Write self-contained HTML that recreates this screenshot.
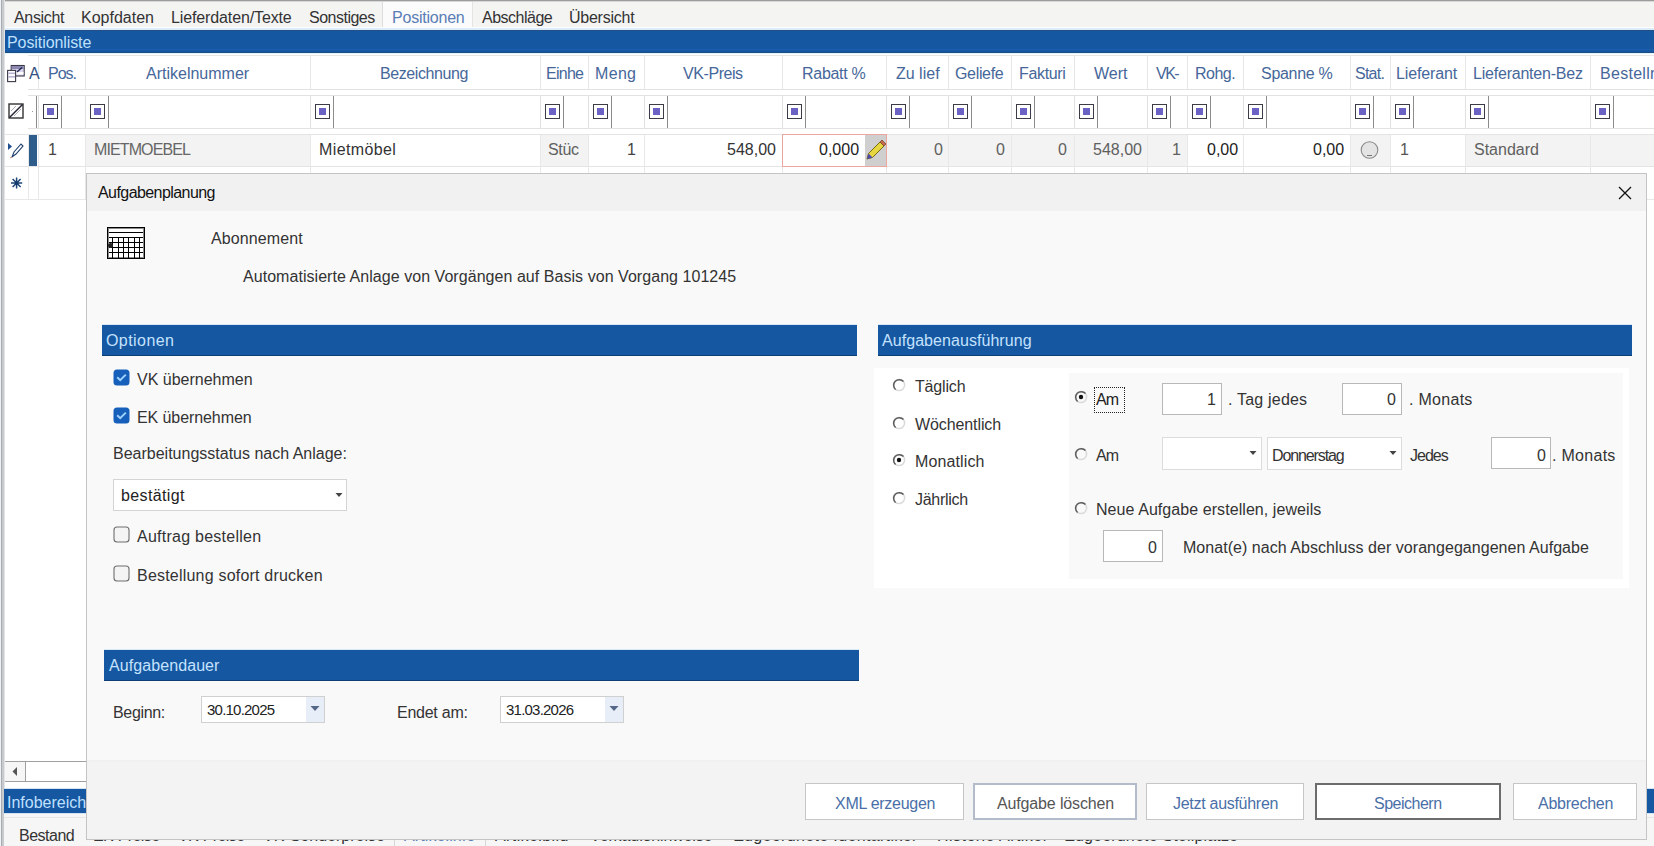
<!DOCTYPE html>
<html><head><meta charset="utf-8"><style>
html,body{margin:0;padding:0;width:1654px;height:846px;overflow:hidden;background:#fff}
.a{position:absolute}
.t{position:absolute;white-space:nowrap;font-family:"Liberation Sans",sans-serif;line-height:20px}
svg.a{overflow:visible}
</style></head><body>
<div class="a" style="left:0px;top:0px;width:1654px;height:846px;background:#ffffff;"></div>
<div class="a" style="left:0px;top:0px;width:1654px;height:30px;background:#f4f4f3;"></div>
<div class="a" style="left:0px;top:0px;width:1654px;height:1px;background:#9c9c9c;"></div>
<div class="a" style="left:0px;top:1px;width:1654px;height:1px;background:#d8d8d8;"></div>
<div class="a" style="left:383px;top:2px;width:89px;height:28px;background:#fbfbfb;"></div>
<div class="a" style="left:382px;top:2px;width:1px;height:28px;background:#dcdcdc;"></div>
<div class="a" style="left:472px;top:2px;width:1px;height:28px;background:#e4e4e4;"></div>
<div class="t" style="left:14.00px;top:8px;font-size:16px;color:#333333;letter-spacing:-0.333px;">Ansicht</div>
<div class="t" style="left:81.00px;top:8px;font-size:16px;color:#333333;">Kopfdaten</div>
<div class="t" style="left:171.00px;top:8px;font-size:16px;color:#333333;letter-spacing:-0.125px;">Lieferdaten/Texte</div>
<div class="t" style="left:309.00px;top:8px;font-size:16px;color:#333333;letter-spacing:-0.500px;">Sonstiges</div>
<div class="t" style="left:392.00px;top:8px;font-size:16px;color:#5a7db5;letter-spacing:-0.222px;">Positionen</div>
<div class="t" style="left:482.00px;top:8px;font-size:16px;color:#333333;letter-spacing:-0.500px;">Abschläge</div>
<div class="t" style="left:569.00px;top:8px;font-size:16px;color:#333333;letter-spacing:-0.250px;">Übersicht</div>
<div class="a" style="left:4px;top:27px;width:1650px;height:1px;background:#ffffff;"></div>
<div class="a" style="left:4px;top:28px;width:1650px;height:2px;background:#dcecfa;"></div>
<div class="a" style="left:4px;top:30px;width:1650px;height:23px;background:#1557a0;"></div>
<div class="a" style="left:4px;top:49px;width:1650px;height:1px;background:#1a5fae;"></div>
<div class="a" style="left:4px;top:30px;width:1650px;height:1px;background:#234f86;"></div>
<div class="a" style="left:4px;top:52px;width:1650px;height:1px;background:#1f4c84;"></div>
<div class="a" style="left:4px;top:53px;width:1650px;height:1px;background:#e2f4fc;"></div>
<div class="a" style="left:28px;top:55px;width:1626px;height:1px;background:#e6e6e6;"></div>
<div class="t" style="left:7.00px;top:33px;font-size:16px;color:#bfe0ff;letter-spacing:-0.083px;">Positionliste</div>
<div class="a" style="left:38px;top:56px;width:1px;height:33px;background:#e6e6e6;"></div>
<div class="a" style="left:85px;top:56px;width:1px;height:33px;background:#e6e6e6;"></div>
<div class="a" style="left:310px;top:56px;width:1px;height:33px;background:#e6e6e6;"></div>
<div class="a" style="left:540px;top:56px;width:1px;height:33px;background:#e6e6e6;"></div>
<div class="a" style="left:588px;top:56px;width:1px;height:33px;background:#e6e6e6;"></div>
<div class="a" style="left:644px;top:56px;width:1px;height:33px;background:#e6e6e6;"></div>
<div class="a" style="left:782px;top:56px;width:1px;height:33px;background:#e6e6e6;"></div>
<div class="a" style="left:886px;top:56px;width:1px;height:33px;background:#e6e6e6;"></div>
<div class="a" style="left:948px;top:56px;width:1px;height:33px;background:#e6e6e6;"></div>
<div class="a" style="left:1011px;top:56px;width:1px;height:33px;background:#e6e6e6;"></div>
<div class="a" style="left:1074px;top:56px;width:1px;height:33px;background:#e6e6e6;"></div>
<div class="a" style="left:1147px;top:56px;width:1px;height:33px;background:#e6e6e6;"></div>
<div class="a" style="left:1187px;top:56px;width:1px;height:33px;background:#e6e6e6;"></div>
<div class="a" style="left:1243px;top:56px;width:1px;height:33px;background:#e6e6e6;"></div>
<div class="a" style="left:1350px;top:56px;width:1px;height:33px;background:#e6e6e6;"></div>
<div class="a" style="left:1390px;top:56px;width:1px;height:33px;background:#e6e6e6;"></div>
<div class="a" style="left:1465px;top:56px;width:1px;height:33px;background:#e6e6e6;"></div>
<div class="a" style="left:1590px;top:56px;width:1px;height:33px;background:#e6e6e6;"></div>
<div class="a" style="left:28px;top:89px;width:1626px;height:1px;background:#e2e2e2;"></div>
<div class="t" style="left:48.00px;top:64px;font-size:16px;color:#46679a;letter-spacing:-1.000px;">Pos.</div>
<div class="t" style="left:146.00px;top:64px;font-size:16px;color:#46679a;">Artikelnummer</div>
<div class="t" style="left:380.00px;top:64px;font-size:16px;color:#46679a;letter-spacing:-0.400px;">Bezeichnung</div>
<div class="t" style="left:546.00px;top:64px;font-size:16px;color:#46679a;letter-spacing:-0.750px;">Einhe</div>
<div class="t" style="left:595.00px;top:64px;font-size:16px;color:#46679a;letter-spacing:0.333px;">Meng</div>
<div class="t" style="left:683.00px;top:64px;font-size:16px;color:#46679a;letter-spacing:-0.429px;">VK-Preis</div>
<div class="t" style="left:802.00px;top:64px;font-size:16px;color:#46679a;letter-spacing:-0.286px;">Rabatt %</div>
<div class="t" style="left:896.00px;top:64px;font-size:16px;color:#46679a;">Zu lief</div>
<div class="t" style="left:955.00px;top:64px;font-size:16px;color:#46679a;letter-spacing:-0.333px;">Geliefe</div>
<div class="t" style="left:1019.00px;top:64px;font-size:16px;color:#46679a;letter-spacing:-0.333px;">Fakturi</div>
<div class="t" style="left:1094.00px;top:64px;font-size:16px;color:#46679a;">Wert</div>
<div class="t" style="left:1156.00px;top:64px;font-size:16px;color:#46679a;letter-spacing:-1.500px;">VK-</div>
<div class="t" style="left:1195.00px;top:64px;font-size:16px;color:#46679a;letter-spacing:-0.500px;">Rohg.</div>
<div class="t" style="left:1261.00px;top:64px;font-size:16px;color:#46679a;letter-spacing:-0.286px;">Spanne %</div>
<div class="t" style="left:1355.00px;top:64px;font-size:16px;color:#46679a;letter-spacing:-0.750px;">Stat.</div>
<div class="t" style="left:1396.00px;top:64px;font-size:16px;color:#46679a;letter-spacing:-0.125px;">Lieferant</div>
<div class="t" style="left:1473.00px;top:64px;font-size:16px;color:#46679a;letter-spacing:-0.214px;">Lieferanten-Bez</div>
<div class="t" style="left:1600.00px;top:64px;font-size:16px;color:#46679a;letter-spacing:0.286px;">Bestelln</div>
<div class="t" style="left:29.00px;top:64px;font-size:16px;color:#34507e;">A</div>
<svg class="a" style="left:4px;top:58px" width="36" height="30" viewBox="4 58 36 30"><rect x="11.2" y="65.5" width="13" height="10.5" fill="#d8d4ec" stroke="#3a3a4a" stroke-width="1.1"/><rect x="11.7" y="66" width="12" height="3" fill="#8c88b0"/><rect x="12" y="72" width="11.5" height="2.5" fill="#fff"/><path d="M17 72 L22 67.5" stroke="#1e2450" stroke-width="1.4"/><rect x="7.6" y="70.4" width="8" height="11.2" fill="#fff" stroke="#3a3a4a" stroke-width="1.1"/><rect x="8.2" y="72.5" width="6.8" height="1.6" fill="#b8b4d4"/><rect x="8.2" y="76" width="6.8" height="1.6" fill="#b8b4d4"/></svg>
<div class="a" style="left:28px;top:95px;width:1626px;height:1px;background:#e2e2e2;"></div>
<div class="a" style="left:28px;top:128px;width:1626px;height:1px;background:#e2e2e2;"></div>
<svg class="a" style="left:8px;top:103px" width="17" height="17" viewBox="0 0 17 17"><rect x="1" y="1" width="14" height="14" fill="#fff" stroke="#333" stroke-width="1.4"/><path d="M1.5 14.5 L14.5 1.5" stroke="#223" stroke-width="1.4"/><path d="M3 8 L8 3 M6 13 L13 6" stroke="#99a" stroke-width="0.8"/></svg>
<div class="a" style="left:36px;top:96px;width:1px;height:32px;background:#8a8a8a;"></div>
<div class="a" style="left:32px;top:111px;width:1px;height:1px;background:#9a9a9a;"></div>
<div class="a" style="left:38px;top:96px;width:1px;height:32px;background:#e0e0e0;"></div>
<div class="a" style="left:43px;top:104px;width:15px;height:15px;background:#ffffff;box-sizing:border-box;border:1.3px solid #3c3c46;"></div>
<div class="a" style="left:47px;top:108px;width:7px;height:7px;background:#6a63c4;"></div>
<div class="a" style="left:61px;top:96px;width:1px;height:32px;background:#8c8c8c;"></div>
<div class="a" style="left:85px;top:96px;width:1px;height:32px;background:#e0e0e0;"></div>
<div class="a" style="left:90px;top:104px;width:15px;height:15px;background:#ffffff;box-sizing:border-box;border:1.3px solid #3c3c46;"></div>
<div class="a" style="left:94px;top:108px;width:7px;height:7px;background:#6a63c4;"></div>
<div class="a" style="left:108px;top:96px;width:1px;height:32px;background:#8c8c8c;"></div>
<div class="a" style="left:310px;top:96px;width:1px;height:32px;background:#e0e0e0;"></div>
<div class="a" style="left:315px;top:104px;width:15px;height:15px;background:#ffffff;box-sizing:border-box;border:1.3px solid #3c3c46;"></div>
<div class="a" style="left:319px;top:108px;width:7px;height:7px;background:#6a63c4;"></div>
<div class="a" style="left:333px;top:96px;width:1px;height:32px;background:#8c8c8c;"></div>
<div class="a" style="left:540px;top:96px;width:1px;height:32px;background:#e0e0e0;"></div>
<div class="a" style="left:545px;top:104px;width:15px;height:15px;background:#ffffff;box-sizing:border-box;border:1.3px solid #3c3c46;"></div>
<div class="a" style="left:549px;top:108px;width:7px;height:7px;background:#6a63c4;"></div>
<div class="a" style="left:563px;top:96px;width:1px;height:32px;background:#8c8c8c;"></div>
<div class="a" style="left:588px;top:96px;width:1px;height:32px;background:#e0e0e0;"></div>
<div class="a" style="left:593px;top:104px;width:15px;height:15px;background:#ffffff;box-sizing:border-box;border:1.3px solid #3c3c46;"></div>
<div class="a" style="left:597px;top:108px;width:7px;height:7px;background:#6a63c4;"></div>
<div class="a" style="left:611px;top:96px;width:1px;height:32px;background:#8c8c8c;"></div>
<div class="a" style="left:644px;top:96px;width:1px;height:32px;background:#e0e0e0;"></div>
<div class="a" style="left:649px;top:104px;width:15px;height:15px;background:#ffffff;box-sizing:border-box;border:1.3px solid #3c3c46;"></div>
<div class="a" style="left:653px;top:108px;width:7px;height:7px;background:#6a63c4;"></div>
<div class="a" style="left:667px;top:96px;width:1px;height:32px;background:#8c8c8c;"></div>
<div class="a" style="left:782px;top:96px;width:1px;height:32px;background:#e0e0e0;"></div>
<div class="a" style="left:787px;top:104px;width:15px;height:15px;background:#ffffff;box-sizing:border-box;border:1.3px solid #3c3c46;"></div>
<div class="a" style="left:791px;top:108px;width:7px;height:7px;background:#6a63c4;"></div>
<div class="a" style="left:805px;top:96px;width:1px;height:32px;background:#8c8c8c;"></div>
<div class="a" style="left:886px;top:96px;width:1px;height:32px;background:#e0e0e0;"></div>
<div class="a" style="left:891px;top:104px;width:15px;height:15px;background:#ffffff;box-sizing:border-box;border:1.3px solid #3c3c46;"></div>
<div class="a" style="left:895px;top:108px;width:7px;height:7px;background:#6a63c4;"></div>
<div class="a" style="left:909px;top:96px;width:1px;height:32px;background:#8c8c8c;"></div>
<div class="a" style="left:948px;top:96px;width:1px;height:32px;background:#e0e0e0;"></div>
<div class="a" style="left:953px;top:104px;width:15px;height:15px;background:#ffffff;box-sizing:border-box;border:1.3px solid #3c3c46;"></div>
<div class="a" style="left:957px;top:108px;width:7px;height:7px;background:#6a63c4;"></div>
<div class="a" style="left:971px;top:96px;width:1px;height:32px;background:#8c8c8c;"></div>
<div class="a" style="left:1011px;top:96px;width:1px;height:32px;background:#e0e0e0;"></div>
<div class="a" style="left:1016px;top:104px;width:15px;height:15px;background:#ffffff;box-sizing:border-box;border:1.3px solid #3c3c46;"></div>
<div class="a" style="left:1020px;top:108px;width:7px;height:7px;background:#6a63c4;"></div>
<div class="a" style="left:1034px;top:96px;width:1px;height:32px;background:#8c8c8c;"></div>
<div class="a" style="left:1074px;top:96px;width:1px;height:32px;background:#e0e0e0;"></div>
<div class="a" style="left:1079px;top:104px;width:15px;height:15px;background:#ffffff;box-sizing:border-box;border:1.3px solid #3c3c46;"></div>
<div class="a" style="left:1083px;top:108px;width:7px;height:7px;background:#6a63c4;"></div>
<div class="a" style="left:1097px;top:96px;width:1px;height:32px;background:#8c8c8c;"></div>
<div class="a" style="left:1147px;top:96px;width:1px;height:32px;background:#e0e0e0;"></div>
<div class="a" style="left:1152px;top:104px;width:15px;height:15px;background:#ffffff;box-sizing:border-box;border:1.3px solid #3c3c46;"></div>
<div class="a" style="left:1156px;top:108px;width:7px;height:7px;background:#6a63c4;"></div>
<div class="a" style="left:1170px;top:96px;width:1px;height:32px;background:#8c8c8c;"></div>
<div class="a" style="left:1187px;top:96px;width:1px;height:32px;background:#e0e0e0;"></div>
<div class="a" style="left:1192px;top:104px;width:15px;height:15px;background:#ffffff;box-sizing:border-box;border:1.3px solid #3c3c46;"></div>
<div class="a" style="left:1196px;top:108px;width:7px;height:7px;background:#6a63c4;"></div>
<div class="a" style="left:1210px;top:96px;width:1px;height:32px;background:#8c8c8c;"></div>
<div class="a" style="left:1243px;top:96px;width:1px;height:32px;background:#e0e0e0;"></div>
<div class="a" style="left:1248px;top:104px;width:15px;height:15px;background:#ffffff;box-sizing:border-box;border:1.3px solid #3c3c46;"></div>
<div class="a" style="left:1252px;top:108px;width:7px;height:7px;background:#6a63c4;"></div>
<div class="a" style="left:1266px;top:96px;width:1px;height:32px;background:#8c8c8c;"></div>
<div class="a" style="left:1350px;top:96px;width:1px;height:32px;background:#e0e0e0;"></div>
<div class="a" style="left:1355px;top:104px;width:15px;height:15px;background:#ffffff;box-sizing:border-box;border:1.3px solid #3c3c46;"></div>
<div class="a" style="left:1359px;top:108px;width:7px;height:7px;background:#6a63c4;"></div>
<div class="a" style="left:1373px;top:96px;width:1px;height:32px;background:#8c8c8c;"></div>
<div class="a" style="left:1390px;top:96px;width:1px;height:32px;background:#e0e0e0;"></div>
<div class="a" style="left:1395px;top:104px;width:15px;height:15px;background:#ffffff;box-sizing:border-box;border:1.3px solid #3c3c46;"></div>
<div class="a" style="left:1399px;top:108px;width:7px;height:7px;background:#6a63c4;"></div>
<div class="a" style="left:1413px;top:96px;width:1px;height:32px;background:#8c8c8c;"></div>
<div class="a" style="left:1465px;top:96px;width:1px;height:32px;background:#e0e0e0;"></div>
<div class="a" style="left:1470px;top:104px;width:15px;height:15px;background:#ffffff;box-sizing:border-box;border:1.3px solid #3c3c46;"></div>
<div class="a" style="left:1474px;top:108px;width:7px;height:7px;background:#6a63c4;"></div>
<div class="a" style="left:1488px;top:96px;width:1px;height:32px;background:#8c8c8c;"></div>
<div class="a" style="left:1590px;top:96px;width:1px;height:32px;background:#e0e0e0;"></div>
<div class="a" style="left:1595px;top:104px;width:15px;height:15px;background:#ffffff;box-sizing:border-box;border:1.3px solid #3c3c46;"></div>
<div class="a" style="left:1599px;top:108px;width:7px;height:7px;background:#6a63c4;"></div>
<div class="a" style="left:1613px;top:96px;width:1px;height:32px;background:#8c8c8c;"></div>
<div class="a" style="left:5px;top:134px;width:1649px;height:1px;background:#e4e4e4;"></div>
<div class="a" style="left:5px;top:166px;width:1649px;height:1px;background:#e4e4e4;"></div>
<div class="a" style="left:5px;top:199px;width:1649px;height:1px;background:#e8e8e8;"></div>
<div class="a" style="left:86px;top:135px;width:224px;height:31px;background:#f3f3f3;"></div>
<div class="a" style="left:541px;top:135px;width:47px;height:31px;background:#f3f3f3;"></div>
<div class="a" style="left:887px;top:135px;width:61px;height:31px;background:#f3f3f3;"></div>
<div class="a" style="left:949px;top:135px;width:62px;height:31px;background:#f3f3f3;"></div>
<div class="a" style="left:1012px;top:135px;width:62px;height:31px;background:#f3f3f3;"></div>
<div class="a" style="left:1075px;top:135px;width:72px;height:31px;background:#f3f3f3;"></div>
<div class="a" style="left:1148px;top:135px;width:39px;height:31px;background:#f3f3f3;"></div>
<div class="a" style="left:1351px;top:135px;width:39px;height:31px;background:#f3f3f3;"></div>
<div class="a" style="left:1466px;top:135px;width:124px;height:31px;background:#f3f3f3;"></div>
<div class="a" style="left:1591px;top:135px;width:69px;height:31px;background:#f3f3f3;"></div>
<div class="a" style="left:38px;top:135px;width:1px;height:64px;background:#e8e8e8;"></div>
<div class="a" style="left:85px;top:135px;width:1px;height:64px;background:#e8e8e8;"></div>
<div class="a" style="left:310px;top:135px;width:1px;height:64px;background:#e8e8e8;"></div>
<div class="a" style="left:540px;top:135px;width:1px;height:64px;background:#e8e8e8;"></div>
<div class="a" style="left:588px;top:135px;width:1px;height:64px;background:#e8e8e8;"></div>
<div class="a" style="left:644px;top:135px;width:1px;height:64px;background:#e8e8e8;"></div>
<div class="a" style="left:782px;top:135px;width:1px;height:64px;background:#e8e8e8;"></div>
<div class="a" style="left:886px;top:135px;width:1px;height:64px;background:#e8e8e8;"></div>
<div class="a" style="left:948px;top:135px;width:1px;height:64px;background:#e8e8e8;"></div>
<div class="a" style="left:1011px;top:135px;width:1px;height:64px;background:#e8e8e8;"></div>
<div class="a" style="left:1074px;top:135px;width:1px;height:64px;background:#e8e8e8;"></div>
<div class="a" style="left:1147px;top:135px;width:1px;height:64px;background:#e8e8e8;"></div>
<div class="a" style="left:1187px;top:135px;width:1px;height:64px;background:#e8e8e8;"></div>
<div class="a" style="left:1243px;top:135px;width:1px;height:64px;background:#e8e8e8;"></div>
<div class="a" style="left:1350px;top:135px;width:1px;height:64px;background:#e8e8e8;"></div>
<div class="a" style="left:1390px;top:135px;width:1px;height:64px;background:#e8e8e8;"></div>
<div class="a" style="left:1465px;top:135px;width:1px;height:64px;background:#e8e8e8;"></div>
<div class="a" style="left:1590px;top:135px;width:1px;height:64px;background:#e8e8e8;"></div>
<div class="a" style="left:28px;top:135px;width:1px;height:64px;background:#e8e8e8;"></div>
<div class="a" style="left:29px;top:135px;width:8px;height:31px;background:#2e5d8c;"></div>
<svg class="a" style="left:7px;top:141px" width="18" height="18" viewBox="0 0 18 18"><path d="M1 2 L5 5.5 L1 9 Z" fill="#1f4f8f"/><path d="M5 16 L7 11 L14 3 L16 5 L9 13 Z" fill="#fff" stroke="#1f3f6f" stroke-width="1.1"/><path d="M3 16.5 L5 16.5" stroke="#c98" stroke-width="1"/></svg>
<div class="t" style="left:48.00px;top:140px;font-size:16px;color:#444;">1</div>
<div class="t" style="left:94.00px;top:140px;font-size:16px;color:#666;letter-spacing:-0.889px;">MIETMOEBEL</div>
<div class="t" style="left:319.00px;top:140px;font-size:16px;color:#333;letter-spacing:0.375px;">Mietmöbel</div>
<div class="t" style="left:548.00px;top:140px;font-size:16px;color:#606060;letter-spacing:-0.333px;">Stüc</div>
<div class="t" style="left:627.00px;top:140px;font-size:16px;color:#444;">1</div>
<div class="t" style="left:727.00px;top:140px;font-size:16px;color:#333;">548,00</div>
<div class="a" style="left:782px;top:134px;width:105px;height:33px;background:#ffffff;box-sizing:border-box;border:1px solid #eba79f;"></div>
<div class="a" style="left:865px;top:135px;width:21px;height:31px;background:#cfcfcf;"></div>
<div class="a" style="left:886px;top:134px;width:1px;height:33px;background:#eba79f;"></div>
<div class="a" style="left:782px;top:166px;width:105px;height:1px;background:#eba79f;"></div>
<div class="t" style="left:819.00px;top:140px;font-size:16px;color:#222;">0,000</div>
<svg class="a" style="left:865px;top:138px" width="22" height="24" viewBox="0 0 22 24"><path d="M2 21 L3.5 15.5 L15 4 L19 8 L7.5 19.5 Z" fill="#e6d640" stroke="#7a6a10" stroke-width="1"/><path d="M15 4 L17 2 L21 6 L19 8 Z" fill="#c86a50" stroke="#7a4a30" stroke-width="0.8"/><path d="M2 21 L3.5 15.5 L7.5 19.5 Z" fill="#4a4ab0"/></svg>
<div class="t" style="left:934.00px;top:140px;font-size:16px;color:#606060;">0</div>
<div class="t" style="left:996.00px;top:140px;font-size:16px;color:#606060;">0</div>
<div class="t" style="left:1058.00px;top:140px;font-size:16px;color:#606060;">0</div>
<div class="t" style="left:1093.00px;top:140px;font-size:16px;color:#606060;">548,00</div>
<div class="t" style="left:1172.00px;top:140px;font-size:16px;color:#606060;">1</div>
<div class="t" style="left:1207.00px;top:140px;font-size:16px;color:#222;">0,00</div>
<div class="t" style="left:1313.00px;top:140px;font-size:16px;color:#222;">0,00</div>
<svg class="a" style="left:1360px;top:141px" width="20" height="19" viewBox="0 0 20 19"><circle cx="9.5" cy="9" r="8.3" fill="#e4e4e4" stroke="#8a8a8a" stroke-width="1.1"/><path d="M7 14.5 L12 14.5" stroke="#777" stroke-width="1"/></svg>
<div class="t" style="left:1400.00px;top:140px;font-size:16px;color:#555;">1</div>
<div class="t" style="left:1474.00px;top:140px;font-size:16px;color:#606060;">Standard</div>
<svg class="a" style="left:9px;top:175px" width="16" height="16" viewBox="0 0 16 16"><path d="M7.6 2.4 V13.6 M2 8 H13.2 M3.6 4 L11.6 12 M3.6 12 L11.6 4" stroke="#1d4578" stroke-width="1.5"/><circle cx="7.6" cy="8" r="1.8" fill="#163a6a"/></svg>
<div class="a" style="left:0px;top:0px;width:1px;height:846px;background:#eef2f5;"></div>
<div class="a" style="left:1px;top:0px;width:1px;height:846px;background:#a8acb0;"></div>
<div class="a" style="left:2px;top:0px;width:2px;height:846px;background:#c8cbce;"></div>
<div class="a" style="left:4px;top:0px;width:1px;height:846px;background:#e2e4e6;"></div>
<div class="a" style="left:5px;top:761px;width:82px;height:1px;background:#a0a0a0;"></div>
<div class="a" style="left:5px;top:781px;width:82px;height:1px;background:#a0a0a0;"></div>
<div class="a" style="left:5px;top:762px;width:20px;height:19px;background:#f6f6f6;"></div>
<div class="a" style="left:25px;top:762px;width:1px;height:19px;background:#a0a0a0;"></div>
<svg class="a" style="left:11px;top:766px" width="8" height="11" viewBox="0 0 8 11"><path d="M6 1 L1.5 5.5 L6 10 Z" fill="#555"/></svg>
<div class="a" style="left:4px;top:788px;width:1650px;height:1px;background:#d4e4f4;"></div>
<div class="a" style="left:4px;top:789px;width:1650px;height:24px;background:#1557a0;"></div>
<div class="a" style="left:4px;top:813px;width:1650px;height:1px;background:#d4e4f4;"></div>
<div class="t" style="left:7.00px;top:793px;font-size:16px;color:#bfe0ff;">Infobereich</div>
<div class="a" style="left:4px;top:814px;width:1650px;height:32px;background:#f6f6f6;"></div>
<div class="a" style="left:4px;top:817px;width:1650px;height:1px;background:#e6e6e6;"></div>
<div class="t" style="left:19.00px;top:826px;font-size:16px;color:#333;letter-spacing:-0.500px;">Bestand</div>
<div class="t" style="left:93.00px;top:826px;font-size:16px;color:#333;letter-spacing:-0.625px;">EK-Preise</div>
<div class="t" style="left:178.00px;top:826px;font-size:16px;color:#333;letter-spacing:-0.625px;">VK-Preise</div>
<div class="t" style="left:263.00px;top:826px;font-size:16px;color:#333;">VK-Sonderpreise</div>
<div class="t" style="left:404.00px;top:826px;font-size:16px;color:#5a7db5;letter-spacing:0.100px;">Artikelinfo</div>
<div class="t" style="left:495.00px;top:826px;font-size:16px;color:#333;letter-spacing:0.400px;">Artikelbild</div>
<div class="t" style="left:590.00px;top:826px;font-size:16px;color:#333;letter-spacing:-0.133px;">Verkaufshinweise</div>
<div class="t" style="left:734.00px;top:826px;font-size:16px;color:#333;letter-spacing:0.348px;">Zugeordnete Identartikel</div>
<div class="t" style="left:937.00px;top:826px;font-size:16px;color:#333;letter-spacing:0.467px;">Historie Artikel</div>
<div class="t" style="left:1065.00px;top:826px;font-size:16px;color:#333;letter-spacing:0.182px;">Zugeordnete Stellplätze</div>
<div class="a" style="left:394px;top:818px;width:1px;height:28px;background:#d8d8d8;"></div>
<div class="a" style="left:485px;top:818px;width:1px;height:28px;background:#d8d8d8;"></div>
<div class="a" style="left:86px;top:173px;width:1561px;height:667px;background:#f9f9f9;box-sizing:border-box;border:1px solid #c4c4c4;"></div>
<div class="a" style="left:87px;top:174px;width:1559px;height:37px;background:#f1f1f1;"></div>
<div class="t" style="left:98.00px;top:183px;font-size:16px;color:#111;letter-spacing:-0.571px;">Aufgabenplanung</div>
<svg class="a" style="left:1617px;top:185px" width="16" height="16" viewBox="0 0 16 16"><path d="M2 2 L14 14 M14 2 L2 14" stroke="#111" stroke-width="1.3"/></svg>
<div class="a" style="left:87px;top:760px;width:1559px;height:79px;background:#f3f3f3;"></div>
<div class="a" style="left:87px;top:760px;width:1559px;height:2px;background:#f0f0f0;"></div>
<div class="a" style="left:107px;top:227px;width:38px;height:32px;background:#ffffff;"></div>
<div class="a" style="left:107px;top:227px;width:38px;height:1px;background:#000000;"></div>
<div class="a" style="left:107px;top:232px;width:38px;height:1px;background:#000000;"></div>
<div class="a" style="left:107px;top:237px;width:38px;height:1px;background:#000000;"></div>
<div class="a" style="left:107px;top:242px;width:38px;height:1px;background:#000000;"></div>
<div class="a" style="left:107px;top:247px;width:38px;height:1px;background:#000000;"></div>
<div class="a" style="left:107px;top:252px;width:38px;height:1px;background:#000000;"></div>
<div class="a" style="left:107px;top:258px;width:38px;height:1px;background:#000000;"></div>
<div class="a" style="left:107px;top:227px;width:1px;height:32px;background:#000000;"></div>
<div class="a" style="left:144px;top:227px;width:1px;height:32px;background:#000000;"></div>
<div class="a" style="left:108px;top:228px;width:36px;height:1px;background:#8a8a8a;"></div>
<div class="a" style="left:108px;top:257px;width:36px;height:1px;background:#8a8a8a;"></div>
<div class="a" style="left:108px;top:228px;width:1px;height:30px;background:#8a8a8a;"></div>
<div class="a" style="left:143px;top:228px;width:1px;height:30px;background:#8a8a8a;"></div>
<div class="a" style="left:112px;top:237px;width:1px;height:21px;background:#000000;"></div>
<div class="a" style="left:118px;top:237px;width:1px;height:21px;background:#000000;"></div>
<div class="a" style="left:123px;top:237px;width:1px;height:21px;background:#000000;"></div>
<div class="a" style="left:128px;top:237px;width:1px;height:21px;background:#000000;"></div>
<div class="a" style="left:134px;top:237px;width:1px;height:21px;background:#000000;"></div>
<div class="a" style="left:139px;top:237px;width:1px;height:21px;background:#000000;"></div>
<div class="a" style="left:108px;top:243px;width:5px;height:5px;border-radius:2.5px;background:#222"></div>
<div class="t" style="left:211.00px;top:229px;font-size:16px;color:#333;letter-spacing:0.111px;">Abonnement</div>
<div class="t" style="left:243.00px;top:267px;font-size:16px;color:#333;letter-spacing:0.048px;">Automatisierte Anlage von Vorgängen auf Basis von Vorgang 101245</div>
<div class="a" style="left:102px;top:324px;width:755px;height:1px;background:#d8e8f8;"></div>
<div class="a" style="left:102px;top:325px;width:755px;height:31px;background:#1557a0;"></div>
<div class="a" style="left:102px;top:355px;width:755px;height:1px;background:#0e3e76;"></div>
<div class="t" style="left:106.00px;top:331px;font-size:16px;color:#c4e2ff;letter-spacing:0.429px;">Optionen</div>
<div class="a" style="left:878px;top:324px;width:754px;height:1px;background:#d8e8f8;"></div>
<div class="a" style="left:878px;top:325px;width:754px;height:31px;background:#1557a0;"></div>
<div class="a" style="left:878px;top:355px;width:754px;height:1px;background:#0e3e76;"></div>
<div class="t" style="left:882.00px;top:331px;font-size:16px;color:#c4e2ff;letter-spacing:0.059px;">Aufgabenausführung</div>
<div class="a" style="left:104px;top:649px;width:755px;height:1px;background:#d8e8f8;"></div>
<div class="a" style="left:104px;top:650px;width:755px;height:31px;background:#1557a0;"></div>
<div class="a" style="left:104px;top:680px;width:755px;height:1px;background:#0e3e76;"></div>
<div class="t" style="left:109.00px;top:656px;font-size:16px;color:#c4e2ff;letter-spacing:0.083px;">Aufgabendauer</div>
<svg class="a" style="left:113px;top:369px" width="17" height="17" viewBox="0 0 17 17"><rect x="0.5" y="0.5" width="16" height="16" rx="3.5" fill="#1660bb"/><path d="M4.2 8.3 L7.2 11.2 L12.8 5.6" stroke="#9fd2ff" stroke-width="2" fill="none"/></svg>
<div class="t" style="left:137.00px;top:370px;font-size:16px;color:#333;">VK übernehmen</div>
<svg class="a" style="left:113px;top:407px" width="17" height="17" viewBox="0 0 17 17"><rect x="0.5" y="0.5" width="16" height="16" rx="3.5" fill="#1660bb"/><path d="M4.2 8.3 L7.2 11.2 L12.8 5.6" stroke="#9fd2ff" stroke-width="2" fill="none"/></svg>
<div class="t" style="left:137.00px;top:408px;font-size:16px;color:#333;letter-spacing:-0.083px;">EK übernehmen</div>
<div class="t" style="left:113.00px;top:444px;font-size:16px;color:#333;">Bearbeitungsstatus nach Anlage:</div>
<div class="a" style="left:113px;top:479px;width:234px;height:32px;background:#ffffff;box-sizing:border-box;border:1px solid #d4d4d4;"></div>
<div class="t" style="left:121.00px;top:486px;font-size:16px;color:#222;letter-spacing:0.375px;">bestätigt</div>
<svg class="a" style="left:335px;top:492px" width="8" height="6" viewBox="0 0 8 6"><path d="M0.5 1 L7.5 1 L4 5 Z" fill="#444"/></svg>
<svg class="a" style="left:113px;top:526px" width="17" height="17" viewBox="0 0 17 17"><rect x="1" y="1" width="15" height="15" rx="3" fill="#f4f4f4" stroke="#6e6e6e" stroke-width="1.1"/></svg>
<div class="t" style="left:137.00px;top:527px;font-size:16px;color:#333;letter-spacing:0.250px;">Auftrag bestellen</div>
<svg class="a" style="left:113px;top:565px" width="17" height="17" viewBox="0 0 17 17"><rect x="1" y="1" width="15" height="15" rx="3" fill="#f4f4f4" stroke="#6e6e6e" stroke-width="1.1"/></svg>
<div class="t" style="left:137.00px;top:566px;font-size:16px;color:#333;letter-spacing:0.208px;">Bestellung sofort drucken</div>
<div class="a" style="left:874px;top:368px;width:755px;height:220px;background:#ffffff;"></div>
<div class="a" style="left:1069px;top:373px;width:554px;height:206px;background:#f9f9f9;"></div>
<svg class="a" style="left:892px;top:378px" width="14" height="14" viewBox="0 0 14 14"><circle cx="7" cy="7" r="5.6" fill="none" stroke="#dadada" stroke-width="1.5"/><path d="M11.5 3.6 A5.6 5.6 0 1 0 3.6 11.5" fill="none" stroke="#5c5c5c" stroke-width="1.5"/></svg>
<div class="t" style="left:915.00px;top:377px;font-size:16px;color:#333;letter-spacing:-0.167px;">Täglich</div>
<svg class="a" style="left:892px;top:416px" width="14" height="14" viewBox="0 0 14 14"><circle cx="7" cy="7" r="5.6" fill="none" stroke="#dadada" stroke-width="1.5"/><path d="M11.5 3.6 A5.6 5.6 0 1 0 3.6 11.5" fill="none" stroke="#5c5c5c" stroke-width="1.5"/></svg>
<div class="t" style="left:915.00px;top:415px;font-size:16px;color:#333;letter-spacing:-0.100px;">Wöchentlich</div>
<svg class="a" style="left:892px;top:453px" width="14" height="14" viewBox="0 0 14 14"><circle cx="7" cy="7" r="5.6" fill="none" stroke="#dadada" stroke-width="1.5"/><path d="M11.5 3.6 A5.6 5.6 0 1 0 3.6 11.5" fill="none" stroke="#5c5c5c" stroke-width="1.5"/><circle cx="7" cy="7" r="2.2" fill="#111"/></svg>
<div class="t" style="left:915.00px;top:452px;font-size:16px;color:#333;letter-spacing:0.125px;">Monatlich</div>
<svg class="a" style="left:892px;top:491px" width="14" height="14" viewBox="0 0 14 14"><circle cx="7" cy="7" r="5.6" fill="none" stroke="#dadada" stroke-width="1.5"/><path d="M11.5 3.6 A5.6 5.6 0 1 0 3.6 11.5" fill="none" stroke="#5c5c5c" stroke-width="1.5"/></svg>
<div class="t" style="left:915.00px;top:490px;font-size:16px;color:#333;letter-spacing:-0.286px;">Jährlich</div>
<svg class="a" style="left:1074px;top:390px" width="14" height="14" viewBox="0 0 14 14"><circle cx="7" cy="7" r="5.6" fill="none" stroke="#dadada" stroke-width="1.5"/><path d="M11.5 3.6 A5.6 5.6 0 1 0 3.6 11.5" fill="none" stroke="#5c5c5c" stroke-width="1.5"/><circle cx="7" cy="7" r="2.2" fill="#111"/></svg>
<div class="a" style="left:1094px;top:387px;width:31px;height:26px;box-sizing:border-box;border:1px dotted #222"></div>
<div class="t" style="left:1096.00px;top:390px;font-size:16px;color:#222;letter-spacing:-1.000px;">Am</div>
<div class="a" style="left:1162px;top:383px;width:60px;height:32px;background:#ffffff;box-sizing:border-box;border:1px solid #b8b8b8;"></div>
<div class="t" style="left:1207.00px;top:390px;font-size:16px;color:#333;">1</div>
<div class="t" style="left:1228.00px;top:390px;font-size:16px;color:#333;letter-spacing:0.200px;">. Tag jedes</div>
<div class="a" style="left:1342px;top:383px;width:60px;height:32px;background:#ffffff;box-sizing:border-box;border:1px solid #b8b8b8;"></div>
<div class="t" style="left:1387.00px;top:390px;font-size:16px;color:#333;">0</div>
<div class="t" style="left:1409.00px;top:390px;font-size:16px;color:#333;letter-spacing:0.286px;">. Monats</div>
<svg class="a" style="left:1074px;top:447px" width="14" height="14" viewBox="0 0 14 14"><circle cx="7" cy="7" r="5.6" fill="none" stroke="#dadada" stroke-width="1.5"/><path d="M11.5 3.6 A5.6 5.6 0 1 0 3.6 11.5" fill="none" stroke="#5c5c5c" stroke-width="1.5"/></svg>
<div class="t" style="left:1096.00px;top:446px;font-size:16px;color:#333;letter-spacing:-1.000px;">Am</div>
<div class="a" style="left:1162px;top:437px;width:100px;height:33px;background:#ffffff;box-sizing:border-box;border:1px solid #dcdcdc;"></div>
<svg class="a" style="left:1249px;top:450px" width="8" height="6" viewBox="0 0 8 6"><path d="M0.5 1 L7.5 1 L4 5 Z" fill="#444"/></svg>
<div class="a" style="left:1267px;top:437px;width:135px;height:33px;background:#ffffff;box-sizing:border-box;border:1px solid #dcdcdc;"></div>
<div class="t" style="left:1272.00px;top:446px;font-size:16px;color:#333;letter-spacing:-1.111px;">Donnerstag</div>
<svg class="a" style="left:1389px;top:450px" width="8" height="6" viewBox="0 0 8 6"><path d="M0.5 1 L7.5 1 L4 5 Z" fill="#444"/></svg>
<div class="t" style="left:1410.00px;top:446px;font-size:16px;color:#333;letter-spacing:-1.000px;">Jedes</div>
<div class="a" style="left:1491px;top:437px;width:60px;height:32px;background:#ffffff;box-sizing:border-box;border:1px solid #b8b8b8;"></div>
<div class="t" style="left:1537.00px;top:446px;font-size:16px;color:#333;">0</div>
<div class="t" style="left:1552.00px;top:446px;font-size:16px;color:#333;letter-spacing:0.286px;">. Monats</div>
<svg class="a" style="left:1074px;top:501px" width="14" height="14" viewBox="0 0 14 14"><circle cx="7" cy="7" r="5.6" fill="none" stroke="#dadada" stroke-width="1.5"/><path d="M11.5 3.6 A5.6 5.6 0 1 0 3.6 11.5" fill="none" stroke="#5c5c5c" stroke-width="1.5"/></svg>
<div class="t" style="left:1096.00px;top:500px;font-size:16px;color:#333;letter-spacing:0.067px;">Neue Aufgabe erstellen, jeweils</div>
<div class="a" style="left:1103px;top:530px;width:60px;height:32px;background:#ffffff;box-sizing:border-box;border:1px solid #b8b8b8;"></div>
<div class="t" style="left:1148.00px;top:538px;font-size:16px;color:#333;">0</div>
<div class="t" style="left:1183.00px;top:538px;font-size:16px;color:#333;letter-spacing:0.040px;">Monat(e) nach Abschluss der vorangegangenen Aufgabe</div>
<div class="t" style="left:113.00px;top:703px;font-size:16px;color:#333;letter-spacing:-0.333px;">Beginn:</div>
<div class="a" style="left:201px;top:696px;width:124px;height:27px;background:#ffffff;box-sizing:border-box;border:1px solid #d0d0d0;"></div>
<div class="a" style="left:306px;top:697px;width:18px;height:25px;background:#e8eef7;"></div>
<svg class="a" style="left:310px;top:705px" width="10" height="7" viewBox="0 0 10 7"><path d="M0.5 1 L9.5 1 L5 6 Z" fill="#55688a"/></svg>
<div class="t" style="left:207.00px;top:700px;font-size:15px;color:#222;letter-spacing:-0.778px;">30.10.2025</div>
<div class="t" style="left:397.00px;top:703px;font-size:16px;color:#333;letter-spacing:-0.250px;">Endet am:</div>
<div class="a" style="left:500px;top:696px;width:124px;height:27px;background:#ffffff;box-sizing:border-box;border:1px solid #d0d0d0;"></div>
<div class="a" style="left:605px;top:697px;width:18px;height:25px;background:#e8eef7;"></div>
<svg class="a" style="left:609px;top:705px" width="10" height="7" viewBox="0 0 10 7"><path d="M0.5 1 L9.5 1 L5 6 Z" fill="#55688a"/></svg>
<div class="t" style="left:506.00px;top:700px;font-size:15px;color:#222;letter-spacing:-0.778px;">31.03.2026</div>
<div class="a" style="left:805px;top:783px;width:159px;height:37px;background:#ffffff;box-sizing:border-box;border:1px solid #c6c6c6;"></div>
<div class="t" style="left:835.00px;top:794px;font-size:16px;color:#4a6fa8;letter-spacing:-0.273px;">XML erzeugen</div>
<div class="a" style="left:973px;top:783px;width:164px;height:37px;background:#ffffff;box-sizing:border-box;border:2px solid #b4bccc;"></div>
<div class="t" style="left:997.00px;top:794px;font-size:16px;color:#555;letter-spacing:-0.143px;">Aufgabe löschen</div>
<div class="a" style="left:1146px;top:783px;width:158px;height:37px;background:#ffffff;box-sizing:border-box;border:1px solid #c6c6c6;"></div>
<div class="t" style="left:1173.00px;top:794px;font-size:16px;color:#4a6fa8;letter-spacing:-0.286px;">Jetzt ausführen</div>
<div class="a" style="left:1315px;top:783px;width:186px;height:37px;background:#ffffff;box-sizing:border-box;border:2px solid #6c6c6c;"></div>
<div class="t" style="left:1374.00px;top:794px;font-size:16px;color:#4a6fa8;letter-spacing:-0.500px;">Speichern</div>
<div class="a" style="left:1513px;top:783px;width:124px;height:37px;background:#ffffff;box-sizing:border-box;border:1px solid #c6c6c6;"></div>
<div class="t" style="left:1538.00px;top:794px;font-size:16px;color:#4a6fa8;letter-spacing:-0.250px;">Abbrechen</div>
</body></html>
